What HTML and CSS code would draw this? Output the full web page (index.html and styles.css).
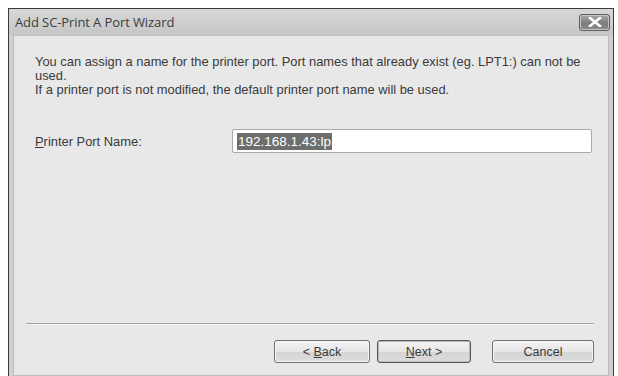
FILE: index.html
```html
<!DOCTYPE html>
<html>
<head>
<meta charset="utf-8">
<link rel="stylesheet" href="styles.css">
</head>
<body>
<div class="window">
  <div class="titlebar">
    <span class="title">Add SC-Print A Port Wizard</span>
    <button class="close" aria-label="Close">
      <svg width="14" height="10" viewBox="0 0 14 10"><path d="M2 1 L12 9 M12 1 L2 9" stroke="#fff" stroke-width="2.6" stroke-linecap="square"/></svg>
    </button>
  </div>
  <div class="client">
    <div class="intro">
      <p>You can assign a name for the printer port. Port names that already exist (eg. LPT1:) can not be used.</p>
      <p>If a printer port is not modified, the default printer port name will be used.</p>
    </div>
    <div class="field">
      <label><u>P</u>rinter Port Name:</label>
      <div class="input"><span class="sel">192.168.1.43:lp</span></div>
    </div>
    <div class="spacer"></div>
    <div class="sep"></div>
    <div class="buttons">
      <button class="btn back">&lt; <u>B</u>ack</button>
      <button class="btn next default"><u>N</u>ext &gt;</button>
      <button class="btn cancel">Cancel</button>
    </div>
  </div>
</div>
</body>
</html>
```
FILE: styles.css
```css
html, body {
  margin: 0;
  padding: 0;
  background: #ffffff;
}
body {
  width: 618px;
  height: 376px;
  overflow: hidden;
  font-family: "Liberation Sans", Arial, sans-serif;
}
.window {
  margin: 8px 0 0 8px;
  width: 606px;
  height: 372px;
  border: 1px solid #3a3a3a;
  border-bottom: none;
  background: #cfcfcf;
  padding: 0 4px 4px 4px;
  box-sizing: border-box;
  display: flex;
  flex-direction: column;
}
.titlebar {
  height: 26px;
  flex-shrink: 0;
  display: flex;
  align-items: center;
  justify-content: space-between;
  background: linear-gradient(#d7d7d7, #c6c6c6);
  margin: 0 -4px;
  padding: 0 3px 0 6px;
}
.title {
  font-family: "Open Sans", "Liberation Sans", sans-serif;
  font-size: 13px;
  color: #3c3c3c;
  letter-spacing: -0.1px;
}
.close {
  width: 31px;
  height: 17px;
  border: 1px solid #5e5e5e;
  border-radius: 3px;
  background: linear-gradient(#a8a8a8, #7c7c7c 55%, #8e8e8e);
  display: flex;
  align-items: center;
  justify-content: center;
  padding: 0;
  box-shadow: inset 0 0 0 1px #c4c4c4;
}
.client {
  flex: 1;
  background: #e8e8e8;
  border: 1px solid #bdbdbd;
  padding: 19px 20px 12px 21px;
  display: flex;
  flex-direction: column;
  font-size: 12.9px;
  color: #3a3a3a;
}
.intro p {
  margin: 0;
  line-height: 14px;
  width: 560px;
}
.field {
  display: flex;
  align-items: center;
  margin-top: 32px;
}
.field label {
  width: 197px;
  flex-shrink: 0;
}
.input {
  width: 360px;
  flex-shrink: 0;
  height: 24px;
  box-sizing: border-box;
  border: 1px solid #a9a9a9;
  border-radius: 2px;
  background: #fff;
  display: flex;
  align-items: center;
  padding-left: 4px;
}
.sel {
  background: #6e6e6e;
  color: #fff;
  font-size: 13.5px;
  line-height: 17px;
  padding: 0 1px;
}
.spacer {
  flex: 1;
}
.sep {
  height: 0;
  border-top: 1px solid #a2a2a2;
  border-bottom: 1px solid #f6f6f6;
  margin: 0 -6px 0 -9px;
}
.buttons {
  display: flex;
  justify-content: flex-end;
  gap: 7px;
  margin-top: 15px;
  margin-right: -6px;
}
.btn {
  height: 23px;
  border: 1px solid #707070;
  border-radius: 3px;
  background: linear-gradient(#f2f2f2, #e6e6e6 50%, #d4d4d4 51%, #dcdcdc);
  font-family: "Liberation Sans", Arial, sans-serif;
  font-size: 12.5px;
  color: #3a3a3a;
  padding: 0;
  box-shadow: inset 0 0 0 1px #f6f6f6;
}
.back { width: 96px; }
.next { width: 94px; }
.cancel { width: 102px; margin-left: 14px; }
.default {
  border-color: #555;
  box-shadow: inset 0 0 0 1px #bbb;
}
```
